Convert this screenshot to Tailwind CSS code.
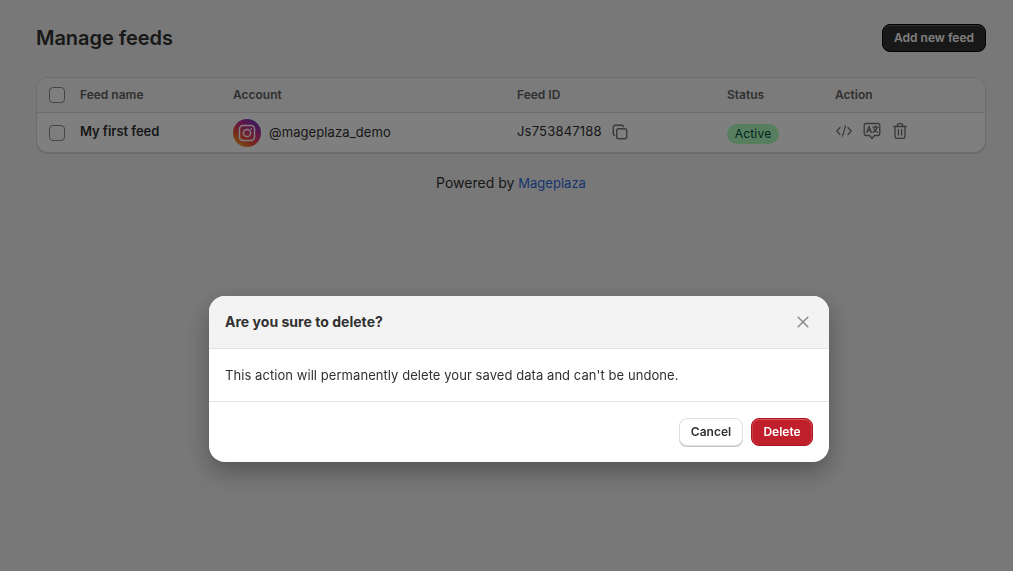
<!DOCTYPE html>
<html lang="en">
<head>
<meta charset="UTF-8">
<title>Manage feeds</title>
<script src="https://cdn.jsdelivr.net/npm/@tailwindcss/browser@4"></script>
</head>
<body class="bg-[#f1f1f1] font-['Inter',sans-serif] text-[13px] text-[#303030] h-[571px] overflow-hidden">
    <!-- page -->
    <div class="w-[950px] ml-[36px] pt-[24px]">
        <div class="flex justify-between items-center h-[28px]">
            <h1 class="text-[20px] leading-[28px] font-semibold text-[#303030] tracking-[-0.05px]">Manage feeds</h1>
            <button class="w-[104px] h-[28px] rounded-lg bg-[#303030] border border-black text-white text-[12px] font-semibold shadow-[inset_0_1px_0_#666]">Add new feed</button>
        </div>

        <!-- table -->
        <div class="mt-[25px] bg-white rounded-xl border border-[#d8d8d8] shadow-[0_1px_0_rgba(0,0,0,0.12)] overflow-hidden">
            <div class="flex items-center h-[35px] bg-[#f7f7f7] border-b border-[#d8d8d8] text-[12px] font-semibold text-[#616161]">
                <div class="w-[43px] pl-[12px]"><div class="w-[16px] h-[16px] rounded-[4px] border border-[#8a8a8a] bg-[#fdfdfd]"></div></div>
                <div class="w-[153px]">Feed name</div>
                <div class="w-[284px]">Account</div>
                <div class="w-[210px]">Feed ID</div>
                <div class="w-[108px]">Status</div>
                <div>Action</div>
            </div>
            <div class="flex items-center h-[39px]">
                <div class="w-[43px] pl-[12px]"><div class="w-[16px] h-[16px] rounded-[4px] border border-[#8a8a8a] bg-[#fdfdfd]"></div></div>
                <div class="w-[153px] font-semibold -mt-[2px] tracking-[-0.05px]">My first feed</div>
                <div class="w-[284px] flex items-center gap-[8px]">
                    <svg class="w-[28px] h-[28px]" viewBox="0 0 28 28">
                        <defs>
                            <linearGradient id="ig" x1="0.15" y1="1" x2="0.85" y2="0">
                                <stop offset="0" stop-color="#f9a825"/>
                                <stop offset="0.35" stop-color="#ee4d3c"/>
                                <stop offset="0.65" stop-color="#c32d8e"/>
                                <stop offset="1" stop-color="#5b3bc4"/>
                            </linearGradient>
                        </defs>
                        <circle cx="14" cy="14" r="14" fill="url(#ig)"/>
                        <rect x="6.5" y="6.5" width="15" height="15" rx="3.5" fill="none" stroke="#fff" stroke-width="1.5"/>
                        <circle cx="14" cy="14" r="3.6" fill="none" stroke="#fff" stroke-width="1.5"/>
                        <circle cx="18.2" cy="9.8" r="0.9" fill="#fff"/>
                    </svg>
                    <span class="text-[13px] tracking-[0.1px] mt-[1px]">@mageplaza_demo</span>
                </div>
                <div class="w-[210px] flex items-center gap-[10px] -mt-[2px]">
                    <span class="tracking-[0.2px]">Js753847188</span>
                    <svg class="w-[16px] h-[16px]" viewBox="0 0 16 16" fill="none" stroke="#707070" stroke-width="1.4">
                        <rect x="4.7" y="4.7" width="10" height="10" rx="2"/>
                        <path d="M11.5 2.6A1.8 1.8 0 0 0 10 1.3H3.2A2 2 0 0 0 1.3 3.2V10a1.8 1.8 0 0 0 1.3 1.5" stroke-linecap="round"/>
                    </svg>
                </div>
                <div class="w-[108px] pt-[2px]">
                    <span class="inline-flex items-center h-[20px] w-[52px] justify-center rounded-full bg-[#affebf] text-[#014b40] text-[12px] tracking-[0.2px]">Active</span>
                </div>
                <div class="flex items-center gap-[10px] -mt-[3px]">
                    <svg class="w-[18px] h-[18px]" viewBox="0 0 18 18" fill="none" stroke="#707070" stroke-width="1.2" stroke-linecap="round" stroke-linejoin="round">
                        <path d="M5 5.5 1.8 9 5 12.5M13 5.5 16.2 9 13 12.5M10.4 3.8 7.6 14.2"/>
                    </svg>
                    <svg class="w-[18px] h-[18px]" viewBox="0 0 18 18" fill="none" stroke="#707070" stroke-width="1.3" stroke-linecap="round" stroke-linejoin="round">
                        <path d="M3 1.5h12A1.8 1.8 0 0 1 16.8 3.3v8.4A1.8 1.8 0 0 1 15 13.5h-3.4L9 16.5l-2.4-3H3a1.8 1.8 0 0 1-1.8-1.8V3.3A1.8 1.8 0 0 1 3 1.5Z"/>
                        <path d="M3.7 10.5 6 4.5l2.3 6M4.6 8.6h2.8M10 5.2h5M12.5 4v1.2M14 5.2c-.4 2.2-2 4.2-4 5.2M10.9 6.8c.7 1.6 2 3 3.8 3.6"/>
                    </svg>
                    <svg class="w-[18px] h-[18px]" viewBox="0 0 18 18" fill="none" stroke="#707070" stroke-width="1.3" stroke-linecap="round" stroke-linejoin="round">
                        <path d="M2.8 4.5h12.4M6.3 4.5V3.3A1.6 1.6 0 0 1 7.9 1.7h2.2a1.6 1.6 0 0 1 1.6 1.6v1.2M4 4.5v9.8a2 2 0 0 0 2 2h6a2 2 0 0 0 2-2V4.5M7.4 7.6v5.4M10.6 7.6v5.4"/>
                    </svg>
                </div>
            </div>
        </div>

        <p class="mt-[21px] text-center text-[14px] leading-[18px] text-[#303030]">Powered by <a class="text-[13px] tracking-[0.02px] text-[#2f6be0]">Mageplaza</a></p>
    </div>

    <!-- modal -->
    <div class="fixed inset-0 bg-black/50 pl-[209px] pt-[296px]">
        <div class="w-[620px] h-[166px] bg-white rounded-2xl shadow-[0_10px_24px_rgba(0,0,0,0.3)] overflow-hidden">
            <div class="flex items-center justify-between h-[53px] pl-[16px] pr-[18px] bg-[#f3f3f3] border-b border-[#e3e3e3]">
                <h2 class="text-[14px] font-bold text-[#303030] -mt-[1px] tracking-[0.03px]">Are you sure to delete?</h2>
                <svg class="w-[16px] h-[16px]" viewBox="0 0 16 16" fill="none" stroke="#8a8a8a" stroke-width="1.5" stroke-linecap="round">
                    <path d="M3.2 3.2 12.8 12.8M12.8 3.2 3.2 12.8"/>
                </svg>
            </div>
            <div class="flex items-center h-[53px] pt-[1px] px-[16px] border-b border-[#e3e3e3] text-[13px] tracking-[0.06px]">This action will permanently delete your saved data and can't be undone.</div>
            <div class="flex justify-end gap-[8px] pt-[16px] pr-[16px]">
                <button class="w-[64px] h-[28px] rounded-lg bg-white border border-[#e0e0e0] shadow-[0_1px_0_#c4c4c4] text-[12px] font-semibold text-[#303030]">Cancel</button>
                <button class="w-[62px] h-[28px] rounded-lg bg-[#c01f2c] border border-[#a31621] shadow-[inset_0_1px_0_#e2555f,inset_1px_0_0_#d0404b,inset_-1px_0_0_#d0404b] text-[12px] font-semibold text-white">Delete</button>
            </div>
        </div>
    </div>
</body>
</html>
